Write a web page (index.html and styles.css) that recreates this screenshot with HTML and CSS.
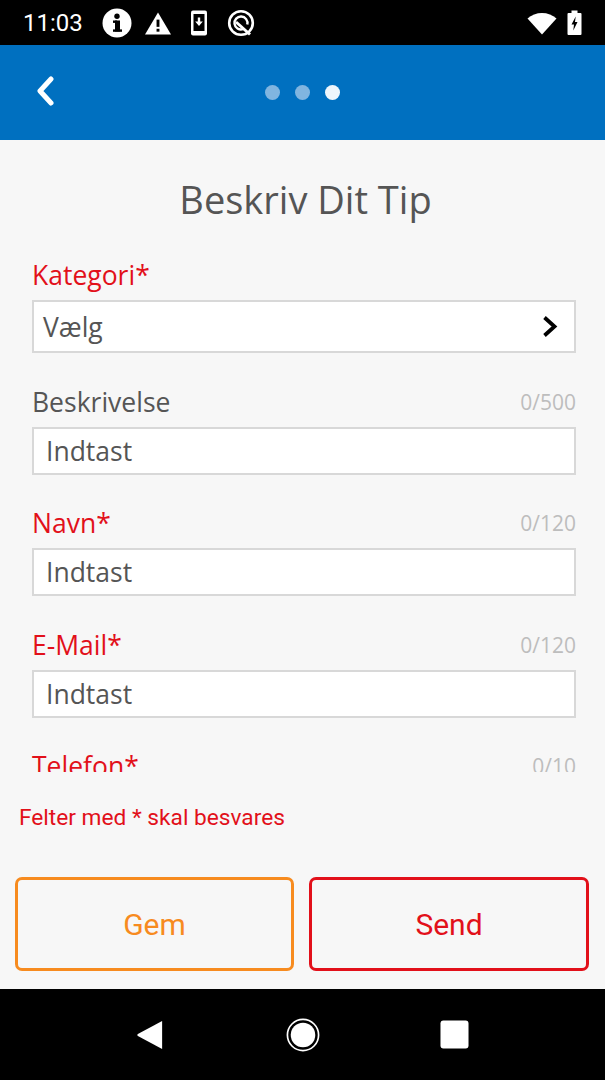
FILE: index.html
```html
<!DOCTYPE html>
<html lang="da">
<head>
    <meta charset="UTF-8">
    <meta name="viewport" content="width=device-width, initial-scale=1.0">
    <title>Beskriv Dit Tip</title>
    <link rel="stylesheet" href="styles.css">
</head>
<body>
    <div class="statusbar">
        <span class="time">11:03</span>
        <div class="status-icons">
            <svg class="icon-info" width="30" height="30" viewBox="0 0 30 30"><circle cx="15" cy="15" r="14.500" fill="#fff"/><rect x="13" y="12.500" width="5" height="11" fill="#000"/><rect x="11" y="12.500" width="4" height="2.400" fill="#000"/><rect x="11" y="21.400" width="9" height="2.400" fill="#000"/><circle cx="15" cy="8.200" r="2.700" fill="#000"/></svg>
            <svg width="26" height="24" viewBox="0 0 27 24"><path d="M13.500 1 L27 24 H0 Z" fill="#fff"/><rect x="12" y="8.500" width="3" height="7.500" fill="#000"/><rect x="12" y="18" width="3" height="3" fill="#000"/></svg>
            <svg width="18" height="26" viewBox="0 0 18 26"><rect x="1" y="0.500" width="16" height="25" rx="2" fill="#fff"/><rect x="3.500" y="4" width="11" height="17" fill="#000"/><path d="M7.800 7.500 h2.400 v4 h2.600 L9 16 5.200 11.500 h2.600 Z" fill="#fff"/></svg>
            <svg width="28" height="28" viewBox="0 0 28 28" fill="none" stroke="#fff"><circle cx="14" cy="14" r="11.800" stroke-width="2.600"/><path d="M20.300 15.500 A6.500 6.500 0 1 0 16 20.200" stroke-width="2.400"/><path d="M9 13 L23 25.500" stroke-width="3"/></svg>
        </div>
        <div class="status-right">
            <svg width="30" height="24" viewBox="0 0 30 24"><path d="M15 23.500 L0.500 7.500 C8 0 22 0 29.500 7.500 Z" fill="#fff"/></svg>
            <svg width="15" height="25" viewBox="0 0 15 25"><path d="M4.500 0.500 h6 v2.500 h3 a1 1 0 0 1 1 1 V24 a1 1 0 0 1 -1 1 H1.500 a1 1 0 0 1 -1 -1 V4 a1 1 0 0 1 1 -1 h3 Z" fill="#fff"/><path d="M8.700 6.500 L4.500 14.500 H7 L6.300 20.500 L10.500 12 H8 Z" fill="#000"/></svg>
        </div>
    </div>

    <header class="topbar">
        <svg class="back" width="20" height="30" viewBox="0 0 20 30"><path d="M16 3 L5 15 L16 27" fill="none" stroke="#fff" stroke-width="5" stroke-linecap="round" stroke-linejoin="round"/></svg>
        <div class="dots">
            <span class="dot"></span>
            <span class="dot"></span>
            <span class="dot active"></span>
        </div>
    </header>

    <main class="content">
        <h1 class="title">Beskriv Dit Tip</h1>

        <div class="form-scroll">
            <div class="field">
                <div class="label-row"><label class="required">Kategori*</label></div>
                <div class="box box-select">
                    <span>Vælg</span>
                    <svg width="16" height="23" viewBox="0 0 16 23"><path d="M2.500 2.500 L12.500 11.500 L2.500 20.500" fill="none" stroke="#000" stroke-width="3.800"/></svg>
                </div>
            </div>
            <div class="field">
                <div class="label-row"><label>Beskrivelse</label><span class="count">0/500</span></div>
                <div class="box">Indtast</div>
            </div>
            <div class="field">
                <div class="label-row"><label class="required">Navn*</label><span class="count">0/120</span></div>
                <div class="box">Indtast</div>
            </div>
            <div class="field">
                <div class="label-row"><label class="required">E-Mail*</label><span class="count">0/120</span></div>
                <div class="box">Indtast</div>
            </div>
            <div class="field">
                <div class="label-row"><label class="required">Telefon*</label><span class="count">0/10</span></div>
            </div>
        </div>

        <p class="note">Felter med * skal besvares</p>

        <div class="actions">
            <button class="btn btn-save">Gem</button>
            <button class="btn btn-send">Send</button>
        </div>
    </main>

    <nav class="navbar">
        <svg class="nav-back" width="28" height="32" viewBox="0 0 30 32"><path d="M28 1 V31 L2 17 Q0.500 16 2 15 Z" fill="#fff"/></svg>
        <svg width="34" height="36" viewBox="0 0 36 36"><circle cx="18" cy="18" r="16.500" fill="none" stroke="#fff" stroke-width="1.800"/><circle cx="18" cy="18" r="13" fill="#fff"/></svg>
        <svg width="29" height="29" viewBox="0 0 30 30"><rect x="0.500" y="0.500" width="29" height="29" rx="3" fill="#fff"/></svg>
    </nav>
</body>
</html>
```

FILE: styles.css
```css
* {
    box-sizing: border-box;
}
body {
    margin: 0;
    width: 605px;
    height: 1080px;
    display: flex;
    flex-direction: column;
    overflow: hidden;
    font-family: "Open Sans", sans-serif;
    background: #000;
}

.statusbar {
    height: 45px;
    background: #000;
    color: #fff;
    display: flex;
    align-items: center;
    padding: 0 23px 0 23px;
}
.time {
    font-family: Roboto, sans-serif;
    font-size: 24px;
    width: 79px;
}
.status-icons {
    display: flex;
    align-items: center;
    gap: 19px;
}
.icon-info {
    margin-right: -6px;
}
.status-right {
    margin-left: auto;
    display: flex;
    align-items: center;
    gap: 10px;
}

.topbar {
    height: 95px;
    background: #0070c0;
    display: flex;
    align-items: center;
    padding-left: 35px;
}
.back {
    margin-top: -3px;
}
.dots {
    display: flex;
    gap: 15px;
    margin-left: 210px;
}
.dot {
    width: 15px;
    height: 15px;
    border-radius: 50%;
    background: #80b5e0;
}
.dot.active {
    background: #eef6fc;
}

.content {
    flex: 1;
    background: #f7f7f7;
    display: flex;
    flex-direction: column;
}
.title {
    margin: 35px 0 0;
    padding-left: 6px;
    text-align: center;
    font-size: 38px;
    line-height: 48px;
    font-weight: 400;
    color: #555;
}
.form-scroll {
    flex: none;
    height: 549px;
    padding: 34px 29px 0 32px;
    overflow: hidden;
}
.field {
    margin-bottom: 30.5px;
}
.label-row {
    display: flex;
    justify-content: space-between;
    align-items: center;
    height: 36px;
    margin-bottom: 7px;
}
label {
    font-size: 26.5px;
    color: #555;
}
label.required {
    color: #e2101a;
}
.count {
    font-size: 21px;
    color: #bdbdbd;
}
.box {
    height: 48px;
    background: #fff;
    border: 2px solid #d8d8d8;
    padding-left: 12px;
    display: flex;
    align-items: center;
    font-size: 26.5px;
    color: #555;
}
.box-select {
    height: 53px;
    justify-content: space-between;
    padding: 0 16px 0 9px;
}

.note {
    margin: 30px 0 0 19px;
    font-family: Roboto, sans-serif;
    font-size: 22.7px;
    line-height: 32px;
    color: #e2101a;
}
.actions {
    display: grid;
    grid-template-columns: 279px 280px;
    gap: 15px;
    padding-left: 15px;
    margin-top: 43px;
}
.btn {
    height: 94px;
    background: transparent;
    border: 3px solid;
    border-radius: 7px;
    font-family: Roboto, sans-serif;
    font-size: 30px;
}
.btn-save {
    color: #f78b1f;
    border-color: #f78b1f;
}
.btn-send {
    color: #e2101a;
    border-color: #e2101a;
}

.navbar {
    height: 91px;
    background: #000;
    display: flex;
    align-items: center;
    padding-left: 136px;
    gap: 120px;
}
.nav-back {
    margin-right: 2px;
}
```
